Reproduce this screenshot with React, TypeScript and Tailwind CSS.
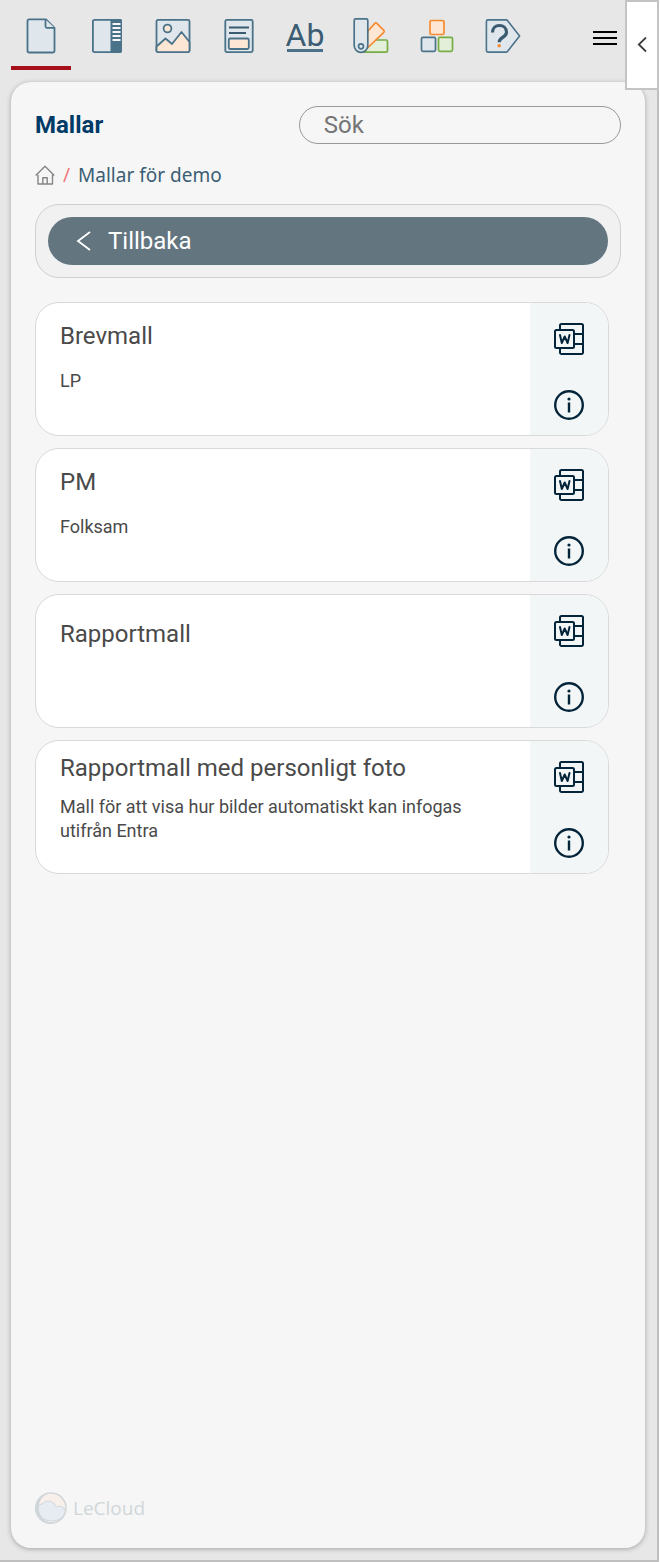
import React from "react";

interface Template {
  title: string;
  description: string;
}

interface Tab {
  label: string;
  icon: React.ReactNode;
}

const templates: Template[] = [
  { title: "Brevmall", description: "LP" },
  { title: "PM", description: "Folksam" },
  { title: "Rapportmall", description: "" },
  {
    title: "Rapportmall med personligt foto",
    description: "Mall för att visa hur bilder automatiskt kan infogas utifrån Entra",
  },
];

const tabs: Tab[] = [
  {
    label: "Mallar",
    icon: (
      <svg viewBox="0 0 36 36" className="size-9" fill="#dfe7ed" stroke="#4a7289" strokeWidth="1.8" strokeLinejoin="round">
        <path d="M6 1.400h17L31.500 10V33a1.500 1.500 0 0 1-1.500 1.500H6A1.500 1.500 0 0 1 4.500 33V2.900A1.500 1.500 0 0 1 6 1.400z" fill="#dfe7ed" />
        <path d="M22.500 1.400V8A1.500 1.500 0 0 0 24 9.800h7.500" />
      </svg>
    ),
  },
  {
    label: "Sidor",
    icon: (
      <svg viewBox="0 0 36 36" className="size-9">
        <rect x="3.900" y="1.900" width="28.200" height="32.200" rx="1.500" fill="#dfe7ed" stroke="#4a7289" strokeWidth="1.800" />
        <path d="M21.500 1H31a2 2 0 0 1 2 2v30a2 2 0 0 1-2 2h-9.500z" fill="#4a7289" />
        <path d="M23.500 6h8M23.500 10h8M23.500 14h8M23.500 18h8M23.500 22h8" stroke="#f4f6f7" strokeWidth="1.800" />
      </svg>
    ),
  },
  {
    label: "Bilder",
    icon: (
      <svg viewBox="0 0 36 36" className="size-9" stroke="#4a7289" strokeWidth="1.800" strokeLinejoin="round">
        <rect x="1.500" y="1.900" width="33" height="32.200" rx="1.500" fill="#dfe7ed" />
        <path d="M1.500 28.500l9-8 6.500 5.500 9.500-12 8 10V32.600a1.500 1.500 0 0 1-1.500 1.500H3a1.500 1.500 0 0 1-1.500-1.500z" fill="#fde6d3" />
        <circle cx="12.500" cy="10.500" r="3.900" fill="#fde6d3" />
      </svg>
    ),
  },
  {
    label: "Textblock",
    icon: (
      <svg viewBox="0 0 36 36" className="size-9" stroke="#4a7289" strokeWidth="1.800" strokeLinejoin="round">
        <rect x="4.300" y="1.900" width="27.400" height="32.200" rx="1.500" fill="#dfe7ed" />
        <path d="M8 9.500h20M8 15h17" stroke="#3a5a70" />
        <rect x="7.800" y="20.500" width="20" height="10.500" rx="1.500" fill="#fde6d3" />
      </svg>
    ),
  },
  {
    label: "Text",
    icon: (
      <span className="flex h-[34px] w-9 justify-center border-b-3 border-[#4a7289] text-[32px] leading-[34px] text-[#3b5d74]">
        Ab
      </span>
    ),
  },
  {
    label: "Färger",
    icon: (
      <svg viewBox="0 0 36 36" className="size-9" strokeWidth="1.700" strokeLinejoin="round">
        <path d="M10 34.200 22 22h11a1.500 1.500 0 0 1 1.500 1.500v9.200a1.500 1.500 0 0 1-1.500 1.500z" fill="#e4efd9" stroke="#76ac43" />
        <path d="M14.500 13.500 21.800 5.400a1.500 1.500 0 0 1 2 0l7 7a1.500 1.500 0 0 1 0 2L14 30.500z" fill="#fde6d3" stroke="#f68a2e" />
        <path d="M1.200 2.400A1.500 1.500 0 0 1 2.700.900h10.600a1.500 1.500 0 0 1 1.500 1.500v25.200a6.800 6.800 0 0 1-13.600 0z" fill="#dfe7ed" stroke="#4a7289" />
        <circle cx="8" cy="28.300" r="2.500" fill="#dfe7ed" stroke="#4a7289" />
      </svg>
    ),
  },
  {
    label: "Element",
    icon: (
      <svg viewBox="0 0 36 36" className="size-9" strokeWidth="1.700">
        <rect x="11" y="2.500" width="14" height="14" rx="1.500" fill="#fde6d3" stroke="#f68a2e" />
        <rect x="2.500" y="19.300" width="14" height="14" rx="1.500" fill="#dfe7ed" stroke="#4a7289" />
        <rect x="19.500" y="19.300" width="14" height="14" rx="1.500" fill="#e4efd9" stroke="#76ac43" />
      </svg>
    ),
  },
  {
    label: "Hjälp",
    icon: (
      <svg viewBox="0 0 36 36" className="size-9">
        <path d="M2.900 1.900h18.300a1.500 1.500 0 0 1 1.200.500L34.600 18 22.400 33.600a1.500 1.500 0 0 1-1.200.500H2.900a1.500 1.500 0 0 1-1.500-1.500V3.400a1.500 1.500 0 0 1 1.500-1.500z" fill="#dfe7ed" stroke="#4a7289" strokeWidth="1.600" strokeLinejoin="round" />
        <path d="M7.500 14.500c0-4.500 3-7 7-7s7 2.700 7 6.800c0 5.700-7.300 4.200-7.300 10" fill="none" stroke="#3a5a70" strokeWidth="3.200" />
        <circle cx="14.200" cy="27.700" r="1.800" fill="#f68a2e" />
      </svg>
    ),
  },
];

function WordIcon() {
  return (
    <svg viewBox="0 0 32 32" className="size-8" fill="none" stroke="#04243a" strokeWidth="2" strokeLinejoin="round">
      <path d="M7 7V2.500a1.500 1.500 0 0 1 1.500-1.500h20A1.500 1.500 0 0 1 30 2.500v27a1.500 1.500 0 0 1-1.500 1.500h-20A1.500 1.500 0 0 1 7 29.500V25" />
      <path d="M21 11h9M21 21h9" />
      <rect x="2" y="7" width="19" height="18" rx="1.500" />
      <path d="M7 12l1.800 8 2.900-6.500 2.900 6.500 1.900-8" strokeLinecap="round" />
    </svg>
  );
}

function InfoIcon() {
  return (
    <svg viewBox="0 0 32 32" className="size-8" fill="none" stroke="#04243a" strokeWidth="2.400">
      <circle cx="16" cy="16" r="13.800" />
      <path d="M16 13.500v10" />
      <circle cx="16" cy="10" r="1.600" fill="#04243a" stroke="none" />
    </svg>
  );
}

function TemplateCard({ title, description }: Template) {
  return (
    <li className="flex h-[134px] overflow-hidden rounded-3xl border border-[#d9d9d9] bg-white">
      <div className="grid flex-1 pr-12 pl-6 text-[#4a4a4a]">
        <h2 className="flex items-center text-2xl leading-6">{title}</h2>
        <p className="text-lg leading-6">{description}</p>
      </div>
      <div className="flex w-[78px] shrink-0 flex-col items-center gap-[34px] bg-[#f2f6f7] pt-5">
        <button type="button" aria-label={`Öppna ${title} i Word`}>
          <WordIcon />
        </button>
        <button type="button" aria-label={`Information om ${title}`}>
          <InfoIcon />
        </button>
      </div>
    </li>
  );
}

export default function App() {
  return (
    <div className="relative mr-px flex min-h-screen flex-col border-r-2 border-b-2 border-[#bfbfbf] bg-[#e7e7e7] pr-3 pb-3 pl-[11px] font-[Roboto,sans-serif]">
      <header className="flex items-start justify-between pr-7">
        <nav className="flex gap-1.5">
          {tabs.map((tab, index) => (
            <button
              key={tab.label}
              type="button"
              aria-label={tab.label}
              className={`flex h-[70px] w-[60px] items-start justify-center border-b-4 pt-[18px] ${
                index === 0 ? "border-[#a6101a]" : "border-transparent"
              }`}
            >
              {tab.icon}
            </button>
          ))}
        </nav>
        <button type="button" aria-label="Meny" className="mt-[26px]">
          <svg viewBox="0 0 24 24" className="size-6" stroke="#000" strokeWidth="2">
            <path d="M0 6h24M0 12h24M0 18h24" />
          </svg>
        </button>
      </header>

      <button
        type="button"
        aria-label="Fäll ihop"
        className="absolute top-0 -right-0.5 flex h-[90px] w-[34px] items-center justify-center border-2 border-[#c4c4c4] bg-white"
      >
        <svg viewBox="0 0 10 16" className="h-4 w-2.5" fill="none" stroke="#3c3c3c" strokeWidth="1.800">
          <path d="M9 .500 1.800 7.500l7.200 7" />
        </svg>
      </button>

      <main className="mt-3 flex flex-1 flex-col rounded-[20px] bg-[#f6f6f6] p-6 shadow-[0_1px_5px_rgba(0,0,0,0.3)]">
        <div className="flex items-center justify-between">
          <h1 className="text-2xl font-bold text-[#003a66]">Mallar</h1>
          <input
            type="search"
            aria-label="Sök"
            placeholder="Sök"
            className="h-[38px] w-[55%] rounded-full border border-[#999] px-6 text-2xl placeholder:text-[#757575]"
          />
        </div>

        <nav className="mt-[18px] flex h-[26px] items-center font-['Noto_Sans',sans-serif] text-[19px]">
          <a href="#" aria-label="Hem">
            <svg viewBox="0 0 20 20" className="size-5" fill="none" stroke="#858585" strokeWidth="1.400" strokeLinejoin="round">
              <path d="M3 9.800v9.200h14.500V9.800M.700 10.500 10 1.200l9.300 9.300" />
              <path d="M7.800 19v-6.200h4.400V19" />
            </svg>
          </a>
          <span className="ml-2 text-[#f2777a]">/</span>
          <a href="#" className="ml-2 text-[#3b5d74]">
            Mallar för demo
          </a>
        </nav>

        <div className="mt-4 rounded-3xl border border-[#d0d0d0] bg-[#f1f1f1] p-3">
          <button type="button" className="flex h-12 w-full items-center gap-4 rounded-full bg-[#63757f] pl-7 text-2xl text-white">
            <svg viewBox="0 0 16 20" className="h-5 w-4" fill="none" stroke="currentColor" strokeWidth="1.800">
              <path d="M14 1 2 10l12 9" />
            </svg>
            Tillbaka
          </button>
        </div>

        <ul className="mt-6 flex flex-col gap-3 pr-3">
          {templates.map((template) => (
            <TemplateCard key={template.title} {...template} />
          ))}
        </ul>

        <footer className="mt-auto flex items-center gap-1.5 font-['Open_Sans',sans-serif] text-[19px] text-[#d0d7da]">
          <svg viewBox="0 0 32 32" className="size-8">
            <circle cx="16" cy="16" r="15" fill="#f8efeb" />
            <path d="M3 20a5 5 0 0 1 4-8 8 8 0 0 1 14 3 6.500 6.500 0 0 1 9.500 5A15 15 0 0 1 3 20z" fill="#e6ecf1" stroke="#d0d7da" />
            <path d="M14 1A15.500 15.500 0 1 0 23 30 14 14 0 0 1 4 19 15.500 15.500 0 0 1 14 1z" fill="#cdd5d8" />
            <circle cx="16" cy="16" r="15" fill="none" stroke="#d0d7da" strokeWidth="1.500" />
          </svg>
          LeCloud
        </footer>
      </main>
    </div>
  );
}
